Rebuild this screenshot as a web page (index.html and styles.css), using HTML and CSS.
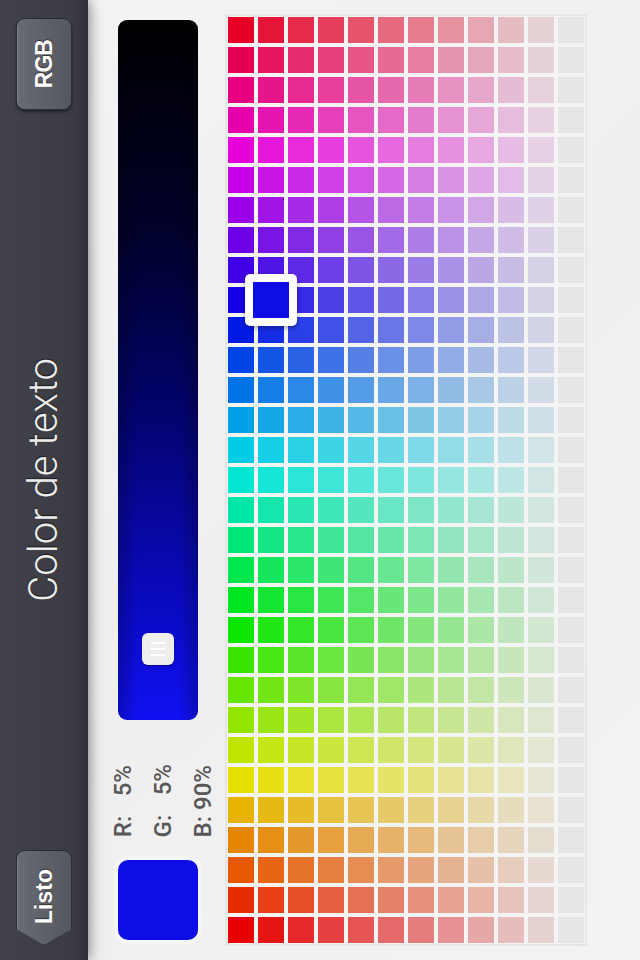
FILE: index.html
```html
<!DOCTYPE html>
<html lang="es">
<head>
  <meta charset="UTF-8" />
  <meta name="viewport" content="width=device-width, initial-scale=1" />
  <title>Color de texto</title>
  <link rel="stylesheet" href="styles.css">
</head>
<body>
  <div class="screen">
    <aside class="sidebar">
      <button class="btn btn-rgb"><span>RGB</span></button>
      <h1 class="title">Color de texto</h1>
      <button class="btn btn-back"><span>Listo</span></button>
    </aside>

    <main class="main">
      <div class="controls">
        <div class="slider">
          <div class="thumb"><i></i><i></i><i></i></div>
        </div>
        <div class="values">
          <span>R:&#8199; 5%</span>
          <span>G:&#8199; 5%</span>
          <span>B: 90%</span>
        </div>
        <div class="swatch"></div>
      </div>

      <div class="palette">
        <div class="grid" id="grid">
          <div class="selected"><div class="selected-color"></div></div>
        </div>
      </div>
    </main>
  </div>

  <script>
    const grid = document.getElementById("grid");
    const rows = 31;
    const cols = 12;
    const gray = 230;

    // hue -> rgb with full saturation, value 0.9
    function hueToRgb(h) {
      h = (h + 360) % 360;
      const c = gray;
      const x = c * (1 - Math.abs((h / 60) % 2 - 1));
      if (h < 60) return [c, x, 0];
      if (h < 120) return [x, c, 0];
      if (h < 180) return [0, c, x];
      if (h < 240) return [0, x, c];
      if (h < 300) return [x, 0, c];
      return [c, 0, x];
    }

    for (let i = 0; i < rows; i++) {
      const base = hueToRgb(350 - i * 350 / 30);
      for (let j = 0; j < cols; j++) {
        const t = j / (cols - 1);
        const rgb = base.map(v => Math.round(v * (1 - t) + gray * t));
        const cell = document.createElement("div");
        cell.className = "cell";
        cell.style.background = `rgb(${rgb.join(",")})`;
        grid.appendChild(cell);
      }
    }
  </script>
</body>
</html>
```

FILE: styles.css
```css
* {
  margin: 0;
  padding: 0;
  box-sizing: border-box;
}

body {
  width: 640px;
  height: 960px;
  overflow: hidden;
  font-family: 'Liberation Sans', Arial, sans-serif;
  background: #f2f2f2;
}

.screen {
  display: flex;
  height: 960px;
}

/* left bar */
.sidebar {
  position: relative;
  z-index: 2;
  width: 88px;
  flex-shrink: 0;
  display: flex;
  flex-direction: column;
  justify-content: space-between;
  align-items: center;
  padding: 18px 0 15px;
  background: linear-gradient(to right, #41424a, #3a3b43 85%, #303137);
  box-shadow: 0 0 14px rgba(0, 0, 0, 0.55);
}

.btn {
  width: 56px;
  border: 1px solid #2c2d33;
  border-radius: 9px;
  background: linear-gradient(to right, #6a6c73, #5f6168 50%, #55575e);
  box-shadow: 0 2px 3px rgba(0, 0, 0, 0.45), inset 1px 0 0 rgba(255, 255, 255, 0.15);
  color: #fff;
  font-family: 'Liberation Sans', Arial, sans-serif;
  font-weight: bold;
  font-size: 23px;
  display: flex;
  align-items: center;
  justify-content: center;
  cursor: pointer;
}

.btn span {
  writing-mode: vertical-rl;
  transform: rotate(180deg);
  text-shadow: 1px 0 1px rgba(0, 0, 0, 0.5);
  line-height: 1;
}

.btn-rgb {
  height: 92px;
}

.btn-rgb span {
  letter-spacing: -1px;
}

.btn-back {
  height: 95px;
  border-radius: 9px 9px 6px 6px;
  padding-bottom: 2px;
  clip-path: polygon(0 0, 100% 0, 100% 83%, 50% 100%, 0 83%);
}

.title {
  writing-mode: vertical-rl;
  transform: rotate(180deg);
  font-family: Roboto, 'Liberation Sans', sans-serif;
  font-weight: 300;
  font-size: 40px;
  line-height: 1;
  color: #ececec;
  text-shadow: 1px 0 1px rgba(0, 0, 0, 0.6);
}

/* main area */
.main {
  flex: 1;
  display: flex;
  padding: 14px 0 0 30px;
  background: linear-gradient(135deg, #f3f3f3, #efefef 50%, #f3f3f3);
}

.controls {
  width: 80px;
  padding-top: 6px;
  display: flex;
  flex-direction: column;
}

.slider {
  position: relative;
  height: 700px;
  border-radius: 9px;
  background:
    linear-gradient(to right, rgba(0, 0, 0, 0.22), rgba(0, 0, 0, 0) 25%, rgba(0, 0, 0, 0) 75%, rgba(0, 0, 0, 0.22)),
    linear-gradient(to bottom, #000 0%, #01012a 30%, #03036a 55%, #0909b8 80%, #1010f2 100%);
}

.thumb {
  position: absolute;
  left: 24px;
  top: 613px;
  width: 32px;
  height: 32px;
  border-radius: 6px;
  background: #eeeeee;
  box-shadow: 0 1px 2px rgba(0, 0, 0, 0.4);
  display: flex;
  flex-direction: column;
  align-items: center;
  justify-content: center;
  gap: 4px;
}

.thumb i {
  display: block;
  width: 14px;
  height: 2px;
  background: #fff;
}

.values {
  height: 140px;
  display: flex;
  align-items: flex-end;
  gap: 16px;
  margin-left: -7px;
  padding-bottom: 23px;
}

.values span {
  writing-mode: vertical-rl;
  transform: rotate(180deg);
  font-family: Roboto, 'Liberation Sans', sans-serif;
  font-weight: 500;
  font-size: 24px;
  line-height: 24px;
  color: #575757;
  white-space: pre;
}

.swatch {
  width: 80px;
  height: 80px;
  border-radius: 10px;
  background: #0d0de6;
  box-shadow: 0 0 0 4px rgba(255, 255, 255, 0.35);
}

/* colour grid */
.palette {
  margin-left: 27px;
  height: 932px;
  padding: 1px;
  border: 2px solid #e6e6e6;
  background: #f4f4f4;
}

.grid {
  position: relative;
  display: grid;
  grid-template-columns: repeat(12, 26px);
  grid-auto-rows: 26px;
  gap: 4px;
}

.selected {
  position: absolute;
  z-index: 1;
  left: 17px;
  top: 257px;
  width: 52px;
  height: 52px;
  padding: 8px;
  border-radius: 5px;
  background: #fff;
  box-shadow: 0 2px 5px rgba(0, 0, 0, 0.35);
}

.selected-color {
  width: 36px;
  height: 36px;
  background: #0d0de6;
}
```
